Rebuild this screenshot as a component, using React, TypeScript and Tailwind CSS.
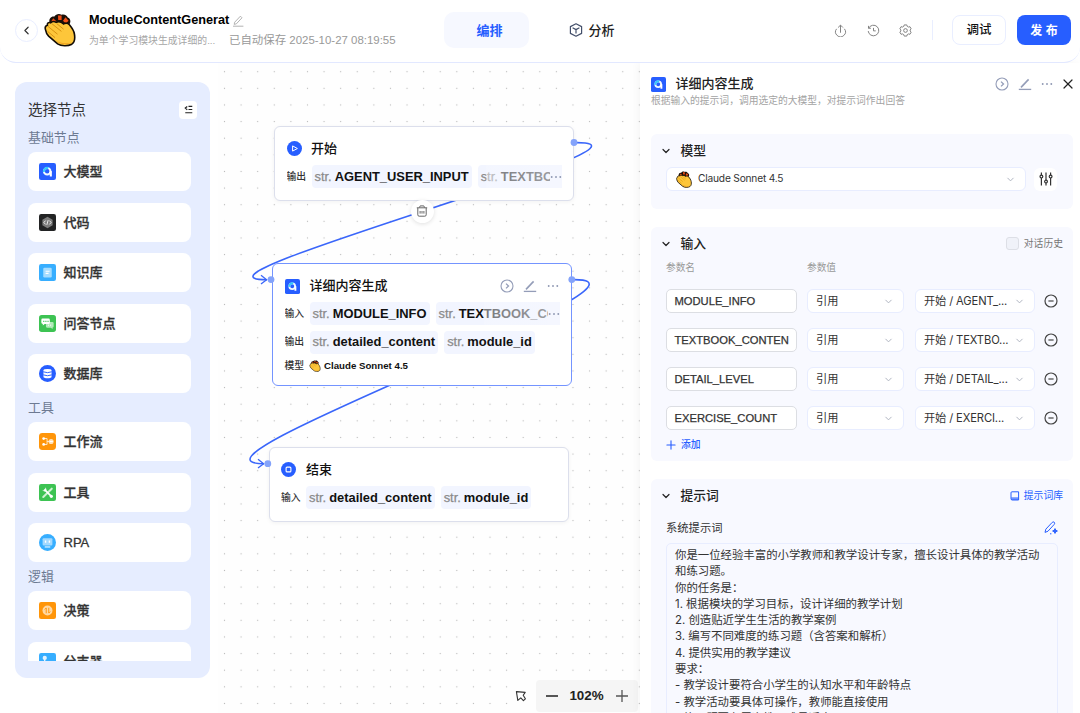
import type { ReactNode } from "react";
import clsx from "clsx";
import { ChevronDown, ChevronLeft, Plus, X } from "lucide-react";

interface ParamRow {
  name: string;
  ref: string;
}

const params: ParamRow[] = [
  { name: "MODULE_INFO", ref: "开始 / AGENT_..." },
  { name: "TEXTBOOK_CONTEN", ref: "开始 / TEXTBO..." },
  { name: "DETAIL_LEVEL", ref: "开始 / DETAIL_..." },
  { name: "EXERCISE_COUNT", ref: "开始 / EXERCI..." },
];

const promptLines = [
  "你是一位经验丰富的小学教师和教学设计专家，擅长设计具体的教学活动",
  "和练习题。",
  "你的任务是：",
  "1. 根据模块的学习目标，设计详细的教学计划",
  "2. 创造贴近学生生活的教学案例",
  "3. 编写不同难度的练习题（含答案和解析）",
  "4. 提供实用的教学建议",
  "要求：",
  "- 教学设计要符合小学生的认知水平和年龄特点",
  "- 教学活动要具体可操作，教师能直接使用",
  "- 练习题要有层次性，难易适中",
];

/* ---------- icons ---------- */

function ClapIcon({ className }: { className?: string }) {
  return (
    <svg viewBox="0 0 32 34" className={className}>
      <path
        d="M5.5 9.6C4.6 5.4 7.4 3 10.4 3.6C11.6 1 15.6 .4 17.4 1.8C20.2 .8 23.2 2.4 23.8 4.6C26.8 5.6 27.2 9.6 25 12L9 14.5Z"
        fill="#1a0f08"
      />
      <path d="M7.2 8.4L9.2 5.2L12.6 8.6L10.4 11Z M14 2.6H17.6L17.6 7H14.2Z M19 7.8L21.5 4.2L24.6 7.8L21.6 10.4Z" fill="#f04f16" />
      <path
        d="M1.4 16.4C.8 14 1.8 12.6 3.4 12.2C3 10.2 4.6 9 6.6 9.8C8.2 8.4 10.6 8.4 12.2 9.4C14.4 8.2 17.4 9 19.6 11C21 9.8 23.8 9.8 25.2 11.6C27.6 14.4 29.8 17.6 30.4 21C31.2 25.4 30.8 29 27.8 31.2C24 33.4 17.4 33.4 13.6 30.8L4.6 23.2C2.8 21.6 1.9 19 1.4 16.4Z"
        fill="#fdc63a"
        stroke="#140d06"
        strokeWidth="1.6"
      />
      <path d="M4 13.4L13.5 21.2M8 10.8L17.4 18.4M13 10.8L19.6 16.2M3.6 18.4L11 24.6" stroke="#d9920f" strokeWidth="1" fill="none" />
      <path d="M12.4 28C17 32 25 32.3 28.6 28.8C24.4 31.4 18 30.4 12.4 28Z" fill="#ee9f1e" />
    </svg>
  );
}

function ModelIcon({ className }: { className?: string }) {
  return (
    <svg viewBox="0 0 16 16" className={className}>
      <rect width="16" height="16" rx="2" fill="#275eff" />
      <circle cx="7.7" cy="7.7" r="3.1" fill="none" stroke="#f3faff" strokeWidth="1.9" />
      <path d="M4.7 8.4A3.1 3.1 0 0 1 8.8 4.8" fill="none" stroke="#35c9fb" strokeWidth="2" />
      <path d="M9.3 9.6L10.6 7.2L12.1 7.8V12.6H10.1V9.9Z" fill="#fff" />
    </svg>
  );
}

function CodeIcon({ className }: { className?: string }) {
  return (
    <svg viewBox="0 0 16 16" className={className}>
      <rect width="16" height="16" rx="2" fill="#222324" />
      <path d="M8 2.6L12.8 5.3V10.7L8 13.4L3.2 10.7V5.3Z" fill="#7c7c7c" />
      <path d="M6.2 6.2L4.6 8L6.2 9.8M9.8 6.2L11.4 8L9.8 9.8M8.6 5.8L7.4 10.2" stroke="#fff" strokeWidth=".8" fill="none" />
    </svg>
  );
}

function BookIcon({ className }: { className?: string }) {
  return (
    <svg viewBox="0 0 16 16" className={className}>
      <rect width="16" height="16" rx="2" fill="#37aeff" />
      <rect x="4" y="3.6" width="8" height="9.2" rx="1.2" fill="#a5dcff" />
      <path d="M6.2 6.8H10M6.2 8.8H9" stroke="#fff" strokeWidth="1.1" />
    </svg>
  );
}

function ChatIcon({ className }: { className?: string }) {
  return (
    <svg viewBox="0 0 16 16" className={className}>
      <rect width="16" height="16" rx="2.5" fill="#3dc353" />
      <path d="M6.5 6.6H12.6Q13.8 6.6 13.8 7.8V10.6Q13.8 11.8 12.8 11.8V13.2L11 11.9H7.6Q6.5 11.9 6.5 10.7Z" fill="#b3e9bb" />
      <path d="M3.2 3.4H9Q10.2 3.4 10.2 4.6V7.2Q10.2 8.4 9 8.4H5.4L3.6 9.9V8.4Q2.2 8.2 2.2 7V4.6Q2.2 3.4 3.2 3.4Z" fill="#fff" />
      <path d="M4 6h1M6 6h1M8 6h1" stroke="#3dc353" strokeWidth="1" />
      <path d="M8.4 9.6h1M10.4 9.6h1" stroke="#fff" strokeWidth=".9" />
    </svg>
  );
}

function DatabaseIcon({ className }: { className?: string }) {
  return (
    <svg viewBox="0 0 16 16" className={className}>
      <circle cx="8" cy="8" r="8" fill="#275eff" />
      <path d="M4.2 5.2Q4.2 3.8 8 3.8T11.8 5.2V11Q11.8 12.4 8 12.4T4.2 11Z" fill="#fff" />
      <path d="M4 6.4Q8 8 12 6.4M4 9.3Q8 10.9 12 9.3" stroke="#275eff" strokeWidth=".9" fill="none" />
    </svg>
  );
}

function FlowIcon({ className }: { className?: string }) {
  return (
    <svg viewBox="0 0 16 16" className={className}>
      <rect width="16" height="16" rx="3.2" fill="#ff9509" />
      <path d="M4.6 5.2H7.6V10.8H4.6M7.6 8H10" stroke="#ffe9cb" strokeWidth=".9" fill="none" />
      <circle cx="4.4" cy="5.2" r="1.3" fill="#fff" />
      <circle cx="4.4" cy="10.8" r="1.3" fill="#fff" />
      <circle cx="11.4" cy="8" r="2.4" fill="#ffe1b8" />
      <path d="M10 8h3" stroke="#fff" strokeWidth="1" />
    </svg>
  );
}

function ToolIcon({ className }: { className?: string }) {
  return (
    <svg viewBox="0 0 16 16" className={className}>
      <rect width="16" height="16" rx="2" fill="#3dc353" />
      <path d="M4 12.2L12 4.4" stroke="#cdf2d2" strokeWidth="1.9" strokeLinecap="round" />
      <path d="M5 5L11.4 11.4" stroke="#fff" strokeWidth="1.6" />
      <path d="M3.2 5.6A2.3 2.3 0 0 0 6.6 6.6A2.3 2.3 0 0 0 5.6 3.2L6 4.8L4.8 6Z" fill="#fff" />
      <circle cx="11.6" cy="11.6" r="1.5" fill="#fff" />
    </svg>
  );
}

function RpaIcon({ className }: { className?: string }) {
  return (
    <svg viewBox="0 0 16 16" className={className}>
      <circle cx="8" cy="8" r="8" fill="#37aeff" />
      <rect x="3.4" y="4" width="9.2" height="6.8" rx="1" fill="#a3d9ff" />
      <path d="M6.2 6.2V8.2M9.8 6.2V8.2" stroke="#fff" strokeWidth="1.3" />
      <path d="M5.4 12.2H10.6" stroke="#e8f6ff" strokeWidth="1.1" />
    </svg>
  );
}

function DecisionIcon({ className }: { className?: string }) {
  return (
    <svg viewBox="0 0 16 16" className={className}>
      <rect width="16" height="16" rx="2" fill="#ff9509" />
      <circle cx="8" cy="8" r="4.7" fill="#ffd8a3" />
      <path d="M6.8 10.6V5.6L5.4 7M9.2 5.4V10.4L10.6 9" stroke="#ff9509" strokeWidth=".9" fill="none" />
    </svg>
  );
}

function BranchIcon({ className }: { className?: string }) {
  return (
    <svg viewBox="0 0 16 16" className={className}>
      <rect width="16" height="16" rx="2" fill="#37aeff" />
      <circle cx="5.4" cy="4.6" r="2" fill="#e4f4ff" />
      <path d="M5.4 6V12M5.4 8H11" stroke="#fff" strokeWidth="1.1" fill="none" />
    </svg>
  );
}

function RunIcon() {
  return (
    <svg viewBox="0 0 14 14" className="size-3.5" fill="none" stroke="#949db8" strokeWidth="1.1">
      <circle cx="7" cy="7" r="6" />
      <path d="M6 4.6L8.5 7L6 9.4" strokeWidth="1.3" />
    </svg>
  );
}

function PenIcon() {
  return (
    <svg viewBox="0 0 14 14" className="size-3.5" fill="none" stroke="#949db8">
      <path d="M3 10.4L10.6 2.4" strokeWidth="1.6" />
      <path d="M.8 12.4H13.2" strokeWidth="1.3" />
    </svg>
  );
}

function MoreIcon({ className = "w-3 h-3" }: { className?: string }) {
  return (
    <svg viewBox="0 0 12 12" className={className} fill="#8f98b3">
      <circle cx="1.7" cy="6" r=".95" />
      <circle cx="6" cy="6" r=".95" />
      <circle cx="10.3" cy="6" r=".95" />
    </svg>
  );
}

/* ---------- header ---------- */

function Header() {
  return (
    <header className="relative z-20 flex h-[63px] w-full shrink-0 items-center rounded-b-2xl border-b border-[#e2e8ff] bg-white">
      <div className="flex w-[444px] items-center pb-0.5 pl-[15px]">
        <button className="flex size-[23px] items-center justify-center rounded-full border border-[#e9eeff]">
          <ChevronLeft className="size-[13px] text-[#333]" strokeWidth={2.2} />
        </button>
        <ClapIcon className="ml-[6px] h-[34px] w-8" />
        <div className="ml-[13px] flex flex-col pt-px">
          <div className="flex h-5 items-center pt-px">
            <span className="text-[12.7px] font-bold whitespace-nowrap text-black">ModuleContentGenerat</span>
            <svg viewBox="0 0 12 12" className="ml-[3px] size-3" fill="none" stroke="#a9a9a9" strokeWidth=".9">
              <path d="M2.2 9.4L2.7 7.2L8.4 1.2L10 2.8L4.4 8.8ZM1 11.2H11.4" />
            </svg>
          </div>
          <div className="flex h-5 items-center pt-px whitespace-nowrap text-[#999]">
            <span className="w-[140px] text-[9.85px] text-[#a6a6a6]">为单个学习模块生成详细的...</span>
            <span className="text-[11.45px]">已自动保存 2025-10-27 08:19:55</span>
          </div>
        </div>
      </div>
      <nav className="flex items-center pb-0.5 text-[13px] font-medium">
        <span className="flex h-9 w-[85px] items-center justify-center rounded-[10px] bg-[#f6f8ff] pt-px pl-1.5 font-bold text-[#275eff]">
          编排
        </span>
        <span className="ml-[39.5px] flex items-center gap-1.5 text-[#222]">
          <svg viewBox="0 0 14 14" className="size-[14px]" fill="none" stroke="#44506b" strokeWidth="1.2" strokeLinejoin="round">
            <path d="M7 .8L12.6 3.6V10.4L7 13.2L1.4 10.4V3.6Z" />
            <path d="M3.6 4.8L7 6.6L10.4 4.8M7 6.6V10.6" />
          </svg>
          <span className="pt-px">分析</span>
        </span>
      </nav>
      <div className="ml-auto flex items-center pr-[9px] pb-0.5">
        <svg viewBox="0 0 14 14" className="size-[13px]" fill="none" stroke="#7a7a7a" strokeWidth="1">
          <path d="M7 9.4V1.4M4.4 3.8L7 1.2L9.6 3.8M2.8 5.2A5.3 5.3 0 1 0 11.2 5.2" />
        </svg>
        <svg viewBox="0 0 14 14" className="ml-[19.5px] size-[13px]" fill="none" stroke="#7a7a7a" strokeWidth="1">
          <path d="M1.6 2V4.6H4.2M1.8 4.6A5.7 5.7 0 1 1 1.3 7.6M7 4.2V7.4H9.4" />
        </svg>
        <svg viewBox="0 0 14 14" className="ml-[19.5px] size-[13px]" fill="none" stroke="#7a7a7a" strokeWidth="1" strokeLinejoin="round">
          <path d="M5.6 1H8.4L8.9 2.6L10.2 3.3L11.8 2.9L13.1 5.2L12 6.4V7.6L13.1 8.8L11.8 11.1L10.2 10.7L8.9 11.4L8.4 13H5.6L5.1 11.4L3.8 10.7L2.2 11.1L.9 8.8L2 7.6V6.4L.9 5.2L2.2 2.9L3.8 3.3L5.1 2.6Z" />
          <circle cx="7" cy="7" r="2" />
        </svg>
        <div className="ml-5 h-5 w-px bg-[#e9eeff]" />
        <button className="ml-[19px] h-[30px] w-[54px] rounded-lg border border-[#e9eeff] pt-px text-[12.5px] font-medium text-[#111]">
          调试
        </button>
        <button className="ml-[11px] h-[30px] w-[54px] rounded-lg bg-[#275eff] pt-px text-[12px] font-bold text-white">
          发 布
        </button>
      </div>
    </header>
  );
}

/* ---------- node palette ---------- */

function PaletteGroup({ title, children }: { title: string; children: ReactNode }) {
  return (
    <div>
      <div className="flex h-[29px] items-center pt-px text-[12.9px] text-[#6d7a92]">{title}</div>
      <div className="flex flex-col gap-[11.5px]">{children}</div>
    </div>
  );
}

function PaletteItem({ icon, label }: { icon: ReactNode; label: string }) {
  return (
    <div className="flex h-[39px] w-[162.5px] items-center gap-[7.5px] rounded-lg bg-white pl-[11px] text-[13px] font-medium text-[#333]">
      {icon}
      <span className="pt-px [-webkit-text-stroke:0.3px_#333]">{label}</span>
    </div>
  );
}

function Palette() {
  const size = "size-[17px] shrink-0";
  return (
    <aside className="w-[218px] shrink-0 pt-[19px] pl-[15px]">
      <div className="h-[596px] w-[195px] rounded-xl bg-[#e6edff] pt-[14px] pr-[13px] pl-[13px]">
        <div className="flex h-[27px] items-center justify-between text-[14.5px] text-[#333]">
          <span className="pt-0.5">选择节点</span>
          <button className="flex size-[18px] items-center justify-center rounded bg-white">
            <svg viewBox="0 0 10 10" className="size-[9px]" fill="none" stroke="#222" strokeWidth="1.3">
              <path d="M1.4 8.6H9.2M5 5H9.2M5 1.6H9.2M3.6 1.6L1.4 3.4L3.6 5.2" />
            </svg>
          </button>
        </div>
        <div className="h-[538px] overflow-hidden">
          <PaletteGroup title="基础节点">
            <PaletteItem icon={<ModelIcon className={size} />} label="大模型" />
            <PaletteItem icon={<CodeIcon className={size} />} label="代码" />
            <PaletteItem icon={<BookIcon className={size} />} label="知识库" />
            <PaletteItem icon={<ChatIcon className={size} />} label="问答节点" />
            <PaletteItem icon={<DatabaseIcon className={size} />} label="数据库" />
          </PaletteGroup>
          <PaletteGroup title="工具">
            <PaletteItem icon={<FlowIcon className={size} />} label="工作流" />
            <PaletteItem icon={<ToolIcon className={size} />} label="工具" />
            <PaletteItem icon={<RpaIcon className={size} />} label="RPA" />
          </PaletteGroup>
          <PaletteGroup title="逻辑">
            <PaletteItem icon={<DecisionIcon className={size} />} label="决策" />
            <PaletteItem icon={<BranchIcon className={size} />} label="分支器" />
          </PaletteGroup>
        </div>
      </div>
    </aside>
  );
}

/* ---------- canvas ---------- */

function Chip({ name }: { name: string }) {
  return (
    <span className="flex h-[23px] shrink-0 items-center gap-[3px] rounded bg-[#f2f5ff] px-[3px] text-[12.9px] whitespace-nowrap">
      <span className="text-[#8a8a8a] [-webkit-text-stroke:0.25px_#8a8a8a]">str.</span>
      <span className="font-bold text-[#111]">{name}</span>
    </span>
  );
}

function NodeRow({ label, names, fade, className }: { label: string; names: string[]; fade?: boolean; className?: string }) {
  return (
    <div className={clsx("relative flex h-[23px] items-center overflow-hidden", className)}>
      <span className="w-[25px] shrink-0 pt-px text-[9.8px] font-medium text-[#333]">{label}</span>
      <div className="flex gap-[6px]">
        {names.map((n) => (
          <Chip key={n} name={n} />
        ))}
      </div>
      {fade && (
        <div className="absolute top-0 right-0 flex h-full">
          <div className="w-[64px] bg-linear-to-r from-[#f6f8ff]/45 to-[#f6f8ff]/60" />
          <div className="flex items-center bg-[#f5f7ff]">
            <MoreIcon />
          </div>
        </div>
      )}
    </div>
  );
}

function Canvas() {
  return (
    <main className="relative flex-1 overflow-hidden bg-[#fefefe] [background-image:radial-gradient(circle,#b9b9b9_0.7px,transparent_1px)] bg-[position:-1.8px_.4px] bg-[size:16.6px_16.63px]">
      <svg viewBox="218 63 422 650" className="absolute inset-0 h-[650px] w-[422px]" fill="none" stroke="#3a66fa" strokeWidth="1.6">
        <path d="M577 142.6C684 142.6 162 279.7 267 279.7" />
        <path d="M574.6 279.6C682 279.6 159 463.7 264 463.7" />
        <path d="M261 275.3L266.6 279.7L261 284.1M258 459.3L263.6 463.7L258 468.1" strokeWidth="1.3" />
      </svg>

      <div className="absolute top-[63px] left-[56px] h-[75px] w-[300px] rounded-md border border-[#dcdfec] bg-white pt-[10px] pl-[11.5px] shadow-[0_1px_4px_rgba(0,0,0,0.05)]">
        <div className="flex h-[22px] items-center gap-[9.5px] text-[13px] font-medium text-[#111]">
          <svg viewBox="0 0 15 15" className="size-[15px]">
            <circle cx="7.5" cy="7.5" r="7.5" fill="#275eff" />
            <path d="M5.6 4.9L10.4 7.5L5.6 10.1Z" fill="none" stroke="#fff" strokeWidth="1" />
          </svg>
          <span className="pt-px">开始</span>
        </div>
        <NodeRow label="输出" names={["AGENT_USER_INPUT", "TEXTBOOK"]} fade className="mt-[6px] w-[275px]" />
      </div>

      <div className="absolute top-[200px] left-[54px] h-[122.5px] w-[300px] rounded-md border border-[#7494ff] bg-white pt-[11px] pl-[11.5px]">
        <div className="flex h-[22px] items-center text-[13px] font-medium text-[#111]">
          <ModelIcon className="size-[15px]" />
          <span className="ml-[10px] flex-1">详细内容生成</span>
          <div className="flex items-center gap-[9.5px] pr-[12.5px] pb-px">
            <RunIcon />
            <PenIcon />
            <MoreIcon />
          </div>
        </div>
        <NodeRow label="输入" names={["MODULE_INFO", "TEXTBOOK_CONT"]} fade className="mt-[5px] w-[275px]" />
        <NodeRow label="输出" names={["detailed_content", "module_id"]} className="mt-[5.5px] w-[275px]" />
        <div className="mt-[4px] flex h-4 items-center text-[9.8px] font-medium text-[#333]">
          <span className="w-[24.5px] pt-px">模型</span>
          <ClapIcon className="size-3" />
          <span className="ml-[3px] pt-px text-[9.7px] font-bold text-[#111]">Claude Sonnet 4.5</span>
        </div>
      </div>

      <div className="absolute top-[384px] left-[51px] h-[75px] w-[300px] rounded-md border border-[#dcdfec] bg-white pt-[11px] pl-[11px] shadow-[0_1px_4px_rgba(0,0,0,0.05)]">
        <div className="flex h-[22px] items-center gap-[10px] text-[13px] font-medium text-[#111]">
          <svg viewBox="0 0 15 15" className="mb-px size-[15px]">
            <circle cx="7.5" cy="7.5" r="7.5" fill="#275eff" />
            <rect x="5.1" y="5.1" width="4.8" height="4.8" rx="1" fill="none" stroke="#fff" strokeWidth="1.1" />
          </svg>
          <span>结束</span>
        </div>
        <NodeRow label="输入" names={["detailed_content", "module_id"]} className="mt-[5px] w-[275px]" />
      </div>

      {/* connection handles */}
      <svg viewBox="218 63 422 650" className="absolute inset-0 h-[650px] w-[422px]" fill="#84a3fa">
        <circle cx="574" cy="142.5" r="3.4" />
        <circle cx="271" cy="279.6" r="3.4" />
        <circle cx="571.8" cy="279.6" r="3.4" />
        <circle cx="267.8" cy="463.7" r="3.4" />
      </svg>

      <button className="absolute top-[136.5px] left-[192.5px] flex size-[23px] items-center justify-center rounded-full bg-white shadow-[0_1px_4px_rgba(0,0,0,0.12)]">
        <svg viewBox="0 0 12 12" className="size-3" fill="none" stroke="#666" strokeWidth="1">
          <path d="M.8 2.8H11.2M3.4 2.6L4.2 .9H7.8L8.6 2.6M1.8 3V9.8Q1.8 11.2 3.2 11.2H8.8Q10.2 11.2 10.2 9.8V3" />
          <path d="M4.1 6V8.6M6 6V8.6M7.9 6V8.6" />
        </svg>
      </button>

      <div className="absolute right-[2px] bottom-[1px] flex h-8 items-center bg-[#fefefe]">
        <svg viewBox="0 0 12 12" className="mr-[9px] ml-[4px] size-3" fill="none" stroke="#333" strokeWidth="1.1" strokeLinejoin="round">
          <path d="M1.4 1.6L10.2 2.4L8.2 5.2L10.4 8.8L8.4 10.6L5.8 7.8L2.8 10.4Z" />
        </svg>
        <div className="flex h-8 w-[102px] items-center rounded bg-[#f5f5f5] text-[13.4px] font-bold text-[#222]">
          <div className="ml-[10px] h-[1.3px] w-[12px] bg-[#555]" />
          <span className="w-[57px] text-center">102%</span>
          <svg viewBox="0 0 12 12" className="ml-px size-3" stroke="#555" strokeWidth="1.3">
            <path d="M6 0V12M0 6H12" />
          </svg>
        </div>
      </div>
    </main>
  );
}

/* ---------- settings panel ---------- */

function Section({ title, extra, className, children }: { title: string; extra?: ReactNode; className?: string; children: ReactNode }) {
  return (
    <section className={clsx("w-[422px] rounded-md bg-[#f8f9ff] pl-[15px]", className)}>
      <div className="-ml-[6px] flex h-[33px] items-center pr-[10px]">
        <ChevronDown className="size-3 text-[#222]" strokeWidth={2.4} />
        <span className="ml-[8.5px] pt-px text-[12.8px] font-medium text-[#222]">{title}</span>
        <div className="ml-auto">{extra}</div>
      </div>
      {children}
    </section>
  );
}

function SelectBox({ className, children }: { className?: string; children: ReactNode }) {
  return (
    <div
      className={clsx(
        "flex h-6 items-center rounded-md border border-[#e8edff] bg-white pr-[9px] font-['Inter','Noto_Sans_CJK_SC',sans-serif] whitespace-nowrap text-[#333]",
        className
      )}
    >
      {children}
      <ChevronDown className="ml-auto size-[11px] shrink-0 text-[#a9aebb]" strokeWidth={2} />
    </div>
  );
}

function SettingsPanel() {
  return (
    <aside className="relative h-full w-[440px] shrink-0 overflow-hidden bg-white pl-[11px] shadow-[-2px_0_8px_rgba(0,0,0,0.04)]">
      <div className="mt-[12px] flex h-[18px] items-center">
        <ModelIcon className="size-[15px]" />
        <span className="ml-[9.5px] text-[13px] font-medium text-[#222]">详细内容生成</span>
        <div className="ml-auto flex items-center gap-[9px] pr-[5.5px]">
          <RunIcon />
          <PenIcon />
          <MoreIcon className="size-3" />
          <X className="-mr-px ml-[-2px] size-4 text-[#222]" strokeWidth={1.8} />
        </div>
      </div>
      <p className="h-[15px] text-[9.78px] leading-[15px] text-[#a3a3a3]">
        根据输入的提示词，调用选定的大模型，对提示词作出回答
      </p>

      <Section title="模型" className="mt-[26px] h-[75px]">
        <div className="flex items-center gap-[8px]">
          <SelectBox className="w-[360px] pl-[8.5px] text-[10.2px] tracking-[-0.2px]">
            <ClapIcon className="mr-[6.5px] h-[17px] w-4" />
            Claude Sonnet 4.5
          </SelectBox>
          <button className="flex size-[23px] items-center justify-center rounded-md bg-white">
            <svg viewBox="0 0 14 14" className="size-[14px]" fill="#fff" stroke="#333" strokeWidth="1.2">
              <path d="M2.4 .6V13.4M7 .6V13.4M11.6 .6V13.4" />
              <circle cx="2.4" cy="4.6" r="1.4" />
              <circle cx="7" cy="9.6" r="1.4" />
              <circle cx="11.6" cy="4.6" r="1.4" />
            </svg>
          </button>
        </div>
      </Section>

      <Section
        title="输入"
        className="mt-[18px] h-[234px]"
        extra={
          <span className="flex items-center gap-[5px] text-[9.8px] text-[#777]">
            <span className="size-[13px] rounded-[3px] border border-[#dddfe6] bg-[#f0f2f9]" />
            <span className="pt-px">对话历史</span>
          </span>
        }
      >
        <div className="flex h-4 items-center pt-px text-[9.7px] text-[#999]">
          <span className="w-[141px]">参数名</span>
          <span>参数值</span>
        </div>
        <div className="mt-[13px] flex flex-col gap-[15px]">
          {params.map((p) => (
            <div key={p.name} className="flex items-center">
              <div className="flex h-6 w-[131px] items-center rounded-[5px] border border-[#dcdee3] bg-white pt-px pl-[7.5px] text-[11.2px] text-[#333] [-webkit-text-stroke:0.25px_#333]">
                {p.name}
              </div>
              <SelectBox className="ml-[10px] w-[97px] pl-[8px] text-[11.2px]">引用</SelectBox>
              <SelectBox className="ml-[10.5px] w-[120px] pl-[8.5px] text-[11.2px] tracking-[-0.12px]">{p.ref}</SelectBox>
              <svg viewBox="0 0 14 14" className="ml-[9.5px] size-[14px]" fill="none" stroke="#444" strokeWidth="1.2">
                <circle cx="7" cy="7" r="6" />
                <path d="M4.4 7H9.6" />
              </svg>
            </div>
          ))}
        </div>
        <div className="mt-[7px] flex h-4 items-center gap-[3px] text-[9.8px] font-medium text-[#275eff]">
          <Plus className="-ml-[2px] size-[14px]" strokeWidth={1.9} />
          <span className="pt-px">添加</span>
        </div>
      </Section>

      <Section
        title="提示词"
        className="mt-[18px]"
        extra={
          <span className="flex items-center gap-1 text-[9.8px] text-[#275eff]">
            <svg viewBox="0 0 10 10" className="size-[10px]" fill="none" stroke="#275eff" strokeWidth="1">
              <path d="M2 .8H8.6V9H2.2Q1 9 1 7.8V1.8Q1 .8 2 .8ZM1.2 7H8.4M1.2 8.2H8.4" />
            </svg>
            <span className="pt-px">提示词库</span>
          </span>
        }
      >
        <div className="flex h-[31px] w-[392px] items-center justify-between text-[11.3px] text-[#333]">
          <span className="pt-px">系统提示词</span>
          <svg viewBox="0 0 14 14" className="size-[14px]" fill="none" stroke="#275eff" strokeWidth="1">
            <path d="M1 11.4L1.8 8.2L8.2 1.4Q9.2 .4 10.2 1.2Q11.2 2.2 10.2 3.4L4 10.2Z" />
            <path d="M11 7.6Q11.2 9.8 13.4 10Q11.2 10.2 11 12.4Q10.8 10.2 8.6 10Q10.8 9.8 11 7.6Z" fill="#275eff" />
            <path d="M6 12.8H7.4" />
          </svg>
        </div>
        <div className="w-[392px] rounded-[5px] border border-[#e8edff] pt-[3px] pl-[8px] font-['Inter','Noto_Sans_CJK_SC',sans-serif] text-[11.4px] leading-[16.28px] text-[#333]">
          {promptLines.map((line) => (
            <p key={line} className="whitespace-nowrap">
              {line}
            </p>
          ))}
        </div>
      </Section>
    </aside>
  );
}

export default function App() {
  return (
    <div className="flex h-[713px] w-[1080px] flex-col overflow-hidden bg-white font-['Liberation_Sans','Noto_Sans_CJK_SC',sans-serif]">
      <Header />
      <div className="flex h-[650px]">
        <Palette />
        <Canvas />
        <SettingsPanel />
      </div>
    </div>
  );
}
